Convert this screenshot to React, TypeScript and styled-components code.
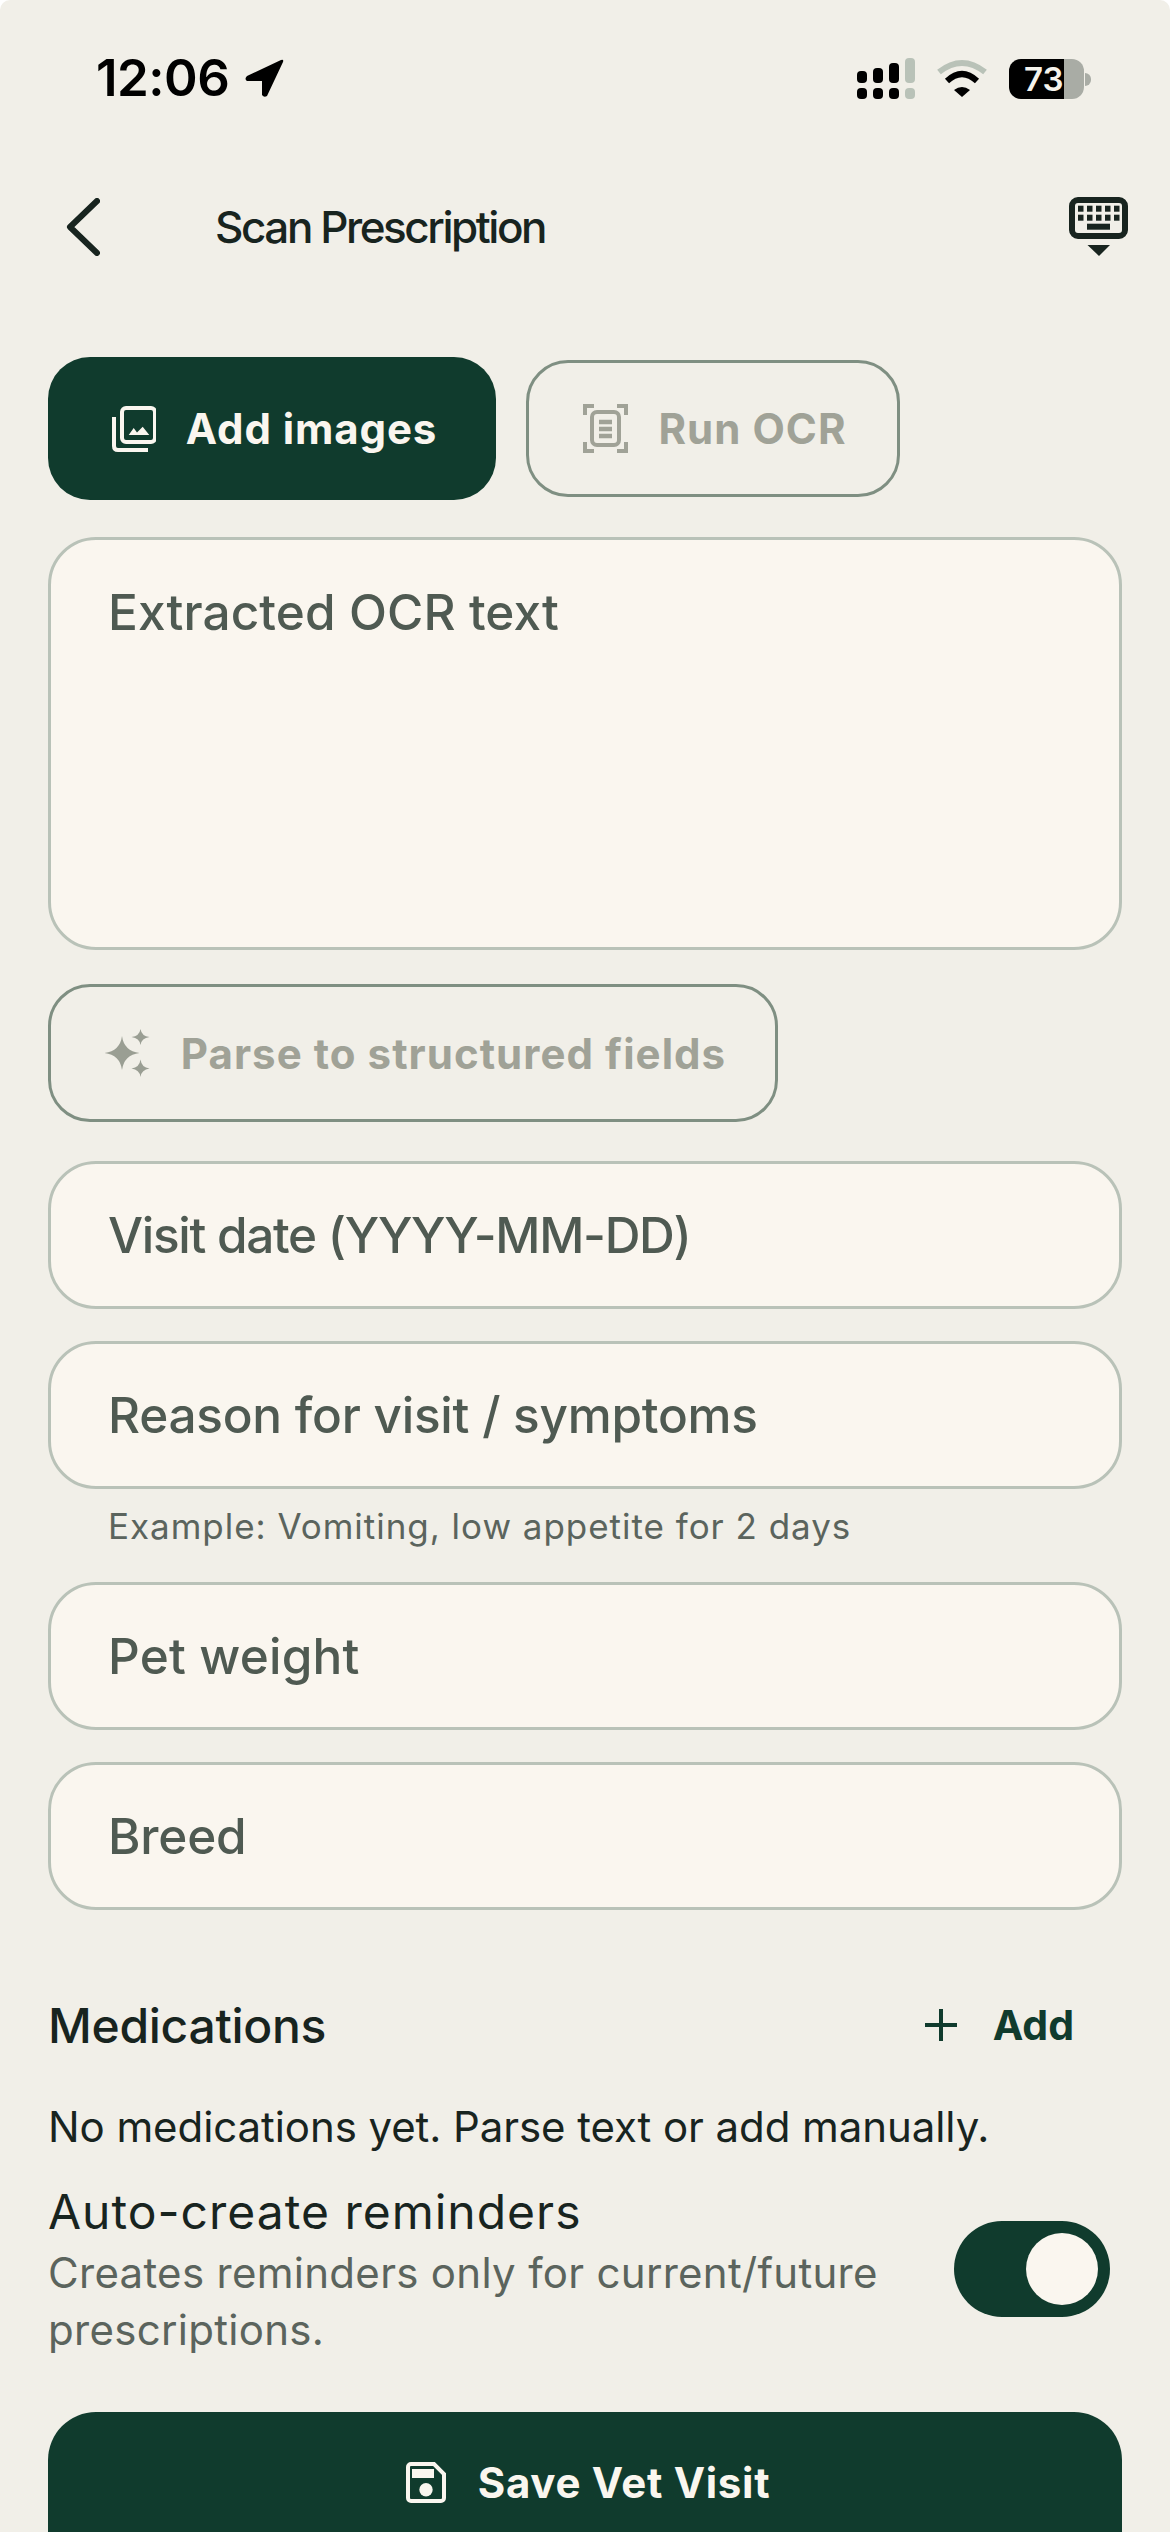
import React from "react";
import styled, { createGlobalStyle } from "styled-components";

const Global = createGlobalStyle`
  html, body { margin: 0; padding: 0; background: #fff; }
  * { box-sizing: border-box; }
`;

const Page = styled.div`
  width: 1170px;
  height: 2532px;
  overflow: hidden;
  background: #f1efe8;
  border-radius: 10px 10px 0 0;
  font-family: Inter, "Liberation Sans", sans-serif;
  display: flex;
  flex-direction: column;
`;

const StatusBar = styled.div`
  height: 120px;
  flex: none;
  padding: 58px 79px 0 96px;
  display: flex;
  align-items: flex-start;
  justify-content: space-between;
`;

const TimeGroup = styled.div`
  display: flex;
  align-items: center;
  gap: 15px;
  height: 40px;
`;

const Clock = styled.span`
  font-size: 51px;
  font-weight: 600;
  line-height: 40px;
  color: #000;
  letter-spacing: -0.5px;
`;

const StatusIcons = styled.div`
  display: flex;
  align-items: center;
  gap: 22px;
  height: 41px;
`;

const Battery = styled.div`
  position: relative;
  width: 82px;
  height: 40px;
`;

const BatteryLevel = styled.span`
  position: absolute;
  left: 0;
  top: 0;
  width: 75px;
  height: 40px;
  border-radius: 12px;
  background: linear-gradient(90deg, #000 0 55px, #a9aca5 55px);
  color: #f5f3ec;
  font-size: 33px;
  font-weight: 600;
  line-height: 40px;
  padding-left: 15px;
`;

const BatteryNub = styled.span`
  position: absolute;
  right: 0;
  top: 14px;
  width: 6px;
  height: 13px;
  border-radius: 0 7px 7px 0;
  background: #a9aca5;
`;

const Header = styled.div`
  height: 210px;
  flex: none;
  padding: 4px 42px 0 66px;
  display: flex;
  align-items: center;
`;

const Title = styled.h1`
  margin: 0 0 0 115px;
  flex: 1;
  font-size: 44px;
  font-weight: 500;
  letter-spacing: -2.45px;
  color: #18241f;
`;

const Content = styled.div`
  padding: 0 48px;
  flex: 1;
  display: flex;
  flex-direction: column;
`;

const ActionRow = styled.div`
  margin-top: 27px;
  height: 143px;
  display: flex;
  align-items: center;
  gap: 30px;
`;

const PrimaryButton = styled.div`
  width: 448px;
  height: 143px;
  padding-left: 5px;
  background: #103b2d;
  border-radius: 42px;
  display: flex;
  align-items: center;
  justify-content: center;
  gap: 30px;
  color: #faf6ef;
  font-size: 42px;
  font-weight: 700;
  letter-spacing: 0.9px;
`;

const GhostButton = styled.div<{ $w: number; $h: number; $gap: number }>`
  width: ${(p) => p.$w}px;
  height: ${(p) => p.$h}px;
  padding-left: 4px;
  border: 3px solid #7f8f82;
  border-radius: 42px;
  display: flex;
  align-items: center;
  justify-content: center;
  gap: ${(p) => p.$gap}px;
  color: #a0a297;
  font-size: 42px;
  font-weight: 700;
  letter-spacing: 1.05px;
`;

const ParseRow = styled.div`
  margin-top: 34px;
  display: flex;
`;

const TextArea = styled.div`
  margin-top: 37px;
  height: 413px;
  padding: 42px 57px;
  background: #faf6ef;
  border: 3px solid #b9c2b8;
  border-radius: 48px;
  color: #4f5a52;
  font-size: 49.5px;
  font-weight: 500;
  line-height: 60px;
  letter-spacing: 0.1px;
`;

const Field = styled.div<{ $mt: number; $track?: number }>`
  margin-top: ${(p) => p.$mt}px;
  height: 148px;
  padding: 0 57px;
  display: flex;
  align-items: center;
  background: #faf6ef;
  border: 3px solid #b9c2b8;
  border-radius: 48px;
  color: #4f5a52;
  font-size: 49.5px;
  font-weight: 500;
  letter-spacing: ${(p) => p.$track ?? 0}px;
`;

const Helper = styled.div`
  margin-top: 17px;
  height: 40px;
  padding-left: 60px;
  color: #5b645d;
  font-size: 35px;
  font-weight: 400;
  line-height: 40px;
  letter-spacing: 0.97px;
`;

const SectionHead = styled.div`
  margin-top: 85px;
  height: 60px;
  display: flex;
  align-items: center;
  justify-content: space-between;
`;

const SectionTitle = styled.h2`
  margin: 0;
  font-size: 48px;
  font-weight: 500;
  letter-spacing: -0.3px;
  color: #18241f;
`;

const AddAction = styled.div`
  display: flex;
  align-items: center;
  gap: 36px;
  padding-right: 48px;
  color: #103b2d;
  font-size: 41px;
  font-weight: 700;
`;

const EmptyNote = styled.p`
  margin: 47px 0 0;
  font-size: 42px;
  font-weight: 400;
  line-height: 50px;
  letter-spacing: -0.08px;
  color: #18241f;
`;

const ToggleRow = styled.div`
  margin-top: 28px;
  display: flex;
  align-items: center;
  justify-content: space-between;
  padding-right: 12px;
`;

const ToggleText = styled.div`
  width: 880px;
`;

const ToggleTitle = styled.div`
  font-size: 48px;
  font-weight: 400;
  line-height: 63px;
  letter-spacing: 1px;
  color: #18241f;
`;

const ToggleNote = styled.div`
  padding-top: 1px;
  font-size: 42px;
  font-weight: 400;
  line-height: 57px;
  letter-spacing: 0.3px;
  color: #5b645d;
`;

const Toggle = styled.div`
  width: 156px;
  height: 96px;
  border-radius: 48px;
  background: #103b2d;
  padding: 12px;
  display: flex;
  justify-content: flex-end;
`;

const Knob = styled.span`
  width: 72px;
  height: 72px;
  border-radius: 50%;
  background: #faf6ef;
`;

const SaveButton = styled.div`
  margin-top: 54px;
  height: 220px;
  flex: none;
  padding: 0 0 80px 6px;
  background: #103b2d;
  border-radius: 48px;
  display: flex;
  align-items: center;
  justify-content: center;
  gap: 32px;
  color: #faf6ef;
  font-size: 42px;
  font-weight: 700;
  letter-spacing: 0.7px;
`;

const Signal = () => (
  <svg width="58" height="41" viewBox="0 0 58 41">
    {[[0, 13, 12], [16, 10, 15], [32, 5, 20]].map(([x, y, h]) => (
      <rect key={x} x={x} y={y} width="10" height={h} rx="4" fill="#000" />
    ))}
    <rect x="48" y="0" width="10" height="25" rx="4" fill="#b9c2b8" />
    {[0, 16, 32].map((x) => (
      <rect key={x} x={x} y="30" width="10" height="11" rx="4" fill="#000" />
    ))}
    <rect x="48" y="30" width="10" height="11" rx="4" fill="#b9c2b8" />
  </svg>
);

const Wifi = () => (
  <svg width="50" height="40" viewBox="0 0 50 40" fill="none">
    <path d="M2 13 Q25 -5 48 13" stroke="#b9c2b8" strokeWidth="6" />
    <path d="M10 22 Q25 8 40 22" stroke="#000" strokeWidth="6" />
    <path d="M17 31 Q25 25 33 31 L25 38 Z" fill="#000" />
  </svg>
);

const LocationArrow = () => (
  <svg width="40" height="39" viewBox="0 0 40 39">
    <path d="M37 1 L3 17 Q0 20 3 22 L18 22 L18 36 Q20 39 23 37 L39 3 Q40 0 37 1Z" fill="#000" />
  </svg>
);

const Chevron = () => (
  <svg width="34" height="58" viewBox="0 0 34 58" fill="none">
    <path d="M31 3 L4 29 L31 55" stroke="#18241f" strokeWidth="6" strokeLinecap="round" strokeLinejoin="round" />
  </svg>
);

const Keyboard = () => (
  <svg width="59" height="60" viewBox="0 0 59 60">
    <rect x="3" y="3" width="53" height="36" rx="6" fill="none" stroke="#18241f" strokeWidth="6" />
    {[9, 18, 27, 36, 45].map((x) =>
      [8.7, 17.7].map((y) => <rect key={`${x}-${y}`} x={x} y={y} width="5.5" height="6" fill="#18241f" />)
    )}
    <rect x="18" y="26.7" width="23" height="6" fill="#18241f" />
    <path d="M18.5 48 H41 L30 59 Z" fill="#18241f" />
  </svg>
);

const ImagesIcon = () => (
  <svg width="44" height="46" viewBox="0 0 44 46" fill="none">
    <rect x="10" y="2" width="33" height="34" rx="4" stroke="#faf6ef" strokeWidth="4" />
    <path d="M2 11 V40 Q2 44 6 44 H36" stroke="#faf6ef" strokeWidth="4" />
    <path d="M16.7 29 L21.7 22 L25 26.5 L30.7 20.7 L37.3 29 Z" fill="#faf6ef" />
  </svg>
);

const ScanIcon = () => (
  <svg width="45" height="49" viewBox="0 0 45 49" fill="none" stroke="#a0a297" strokeWidth="4">
    <path d="M2 11 V2 H11 M34 2 H43 V11 M2 38 V47 H11 M34 47 H43 V38" />
    <rect x="9" y="8" width="27" height="33" rx="5" />
    <path d="M16 18 H29 M16 25 H29 M16 32 H29" strokeWidth="4.5" />
  </svg>
);

const Sparkles = () => (
  <svg width="50" height="48" viewBox="0 0 50 48" fill="#9a9e93">
    <path d="M18 7 Q20 22 35.5 24 Q20 26 18 41 Q16 26 0.5 24 Q16 22 18 7Z" />
    <path d="M36.5 0 Q37.5 7 45.5 8 Q37.5 9 36.5 16 Q35.5 9 27.5 8 Q35.5 7 36.5 0Z" />
    <path d="M36.5 30.5 Q37.5 38.5 45.5 39.5 Q37.5 40.5 36.5 48 Q35.5 40.5 27.5 39.5 Q35.5 38.5 36.5 30.5Z" />
  </svg>
);

const PlusIcon = () => (
  <svg width="32" height="32" viewBox="0 0 32 32" fill="none">
    <path d="M16 0 V32 M0 16 H32" stroke="#103b2d" strokeWidth="4" />
  </svg>
);

const SaveIcon = () => (
  <svg width="40" height="41" viewBox="0 0 40 41">
    <path d="M5 2 H28 L38 12 V36 a3 3 0 0 1 -3 3 H5 a3 3 0 0 1 -3 -3 V5 a3 3 0 0 1 3 -3Z" fill="none" stroke="#faf6ef" strokeWidth="4" />
    <rect x="6" y="7" width="22" height="9" fill="#faf6ef" />
    <circle cx="20" cy="27.7" r="6.7" fill="#faf6ef" />
  </svg>
);

export default function App() {
  return (
    <Page>
      <Global />
      <StatusBar>
        <TimeGroup>
          <Clock>12:06</Clock>
          <LocationArrow />
        </TimeGroup>
        <StatusIcons>
          <Signal />
          <Wifi />
          <Battery>
            <BatteryLevel>73</BatteryLevel>
            <BatteryNub />
          </Battery>
        </StatusIcons>
      </StatusBar>
      <Header>
        <Chevron />
        <Title>Scan Prescription</Title>
        <Keyboard />
      </Header>
      <Content>
        <ActionRow>
          <PrimaryButton>
            <ImagesIcon />
            Add images
          </PrimaryButton>
          <GhostButton $w={374} $h={137} $gap={30}>
            <ScanIcon />
            Run OCR
          </GhostButton>
        </ActionRow>
        <TextArea>Extracted OCR text</TextArea>
        <ParseRow>
          <GhostButton $w={730} $h={138} $gap={27}>
            <Sparkles />
            Parse to structured fields
          </GhostButton>
        </ParseRow>
        <Field $mt={39} $track={-1.3}>Visit date (YYYY-MM-DD)</Field>
        <Field $mt={32} $track={-0.25}>Reason for visit / symptoms</Field>
        <Helper>Example: Vomiting, low appetite for 2 days</Helper>
        <Field $mt={36} $track={0.2}>Pet weight</Field>
        <Field $mt={32} $track={-0.2}>Breed</Field>
        <SectionHead>
          <SectionTitle>Medications</SectionTitle>
          <AddAction>
            <PlusIcon />
            Add
          </AddAction>
        </SectionHead>
        <EmptyNote>No medications yet. Parse text or add manually.</EmptyNote>
        <ToggleRow>
          <ToggleText>
            <ToggleTitle>Auto-create reminders</ToggleTitle>
            <ToggleNote>Creates reminders only for current/future prescriptions.</ToggleNote>
          </ToggleText>
          <Toggle>
            <Knob />
          </Toggle>
        </ToggleRow>
        <SaveButton>
          <SaveIcon />
          Save Vet Visit
        </SaveButton>
      </Content>
    </Page>
  );
}
